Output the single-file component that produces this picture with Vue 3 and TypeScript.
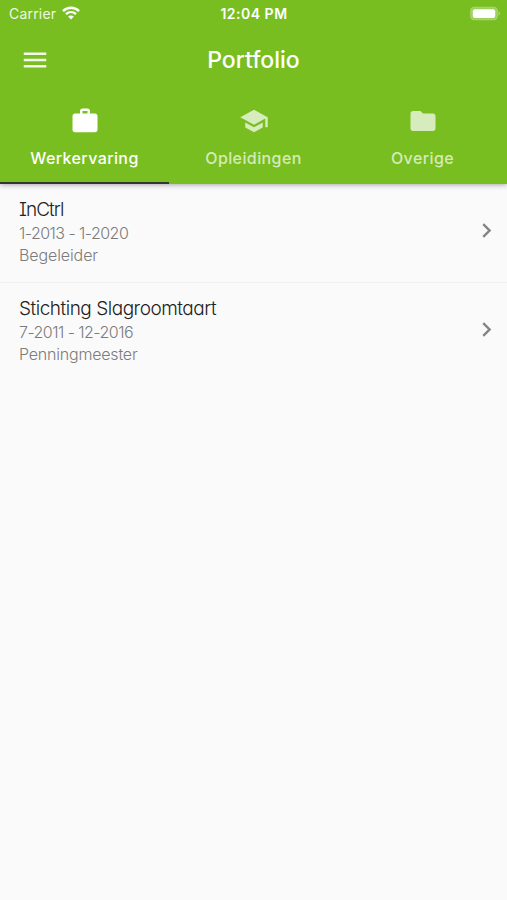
<script setup lang="ts">
import { ref } from 'vue'

interface Tab {
  label: string
  icon: string
  kind: string
}
interface Job {
  company: string
  period: string
  role: string
  kind: string
}

const active = ref(0)

const tabs: Tab[] = [
  {
    label: 'Werkervaring',
    kind: 'work',
    icon: 'M20 6h-4V4c0-1.11-.89-2-2-2h-4c-1.11 0-2 .89-2 2v2H4c-1.11 0-1.99.89-1.99 2L2 19c0 1.11.89 2 2 2h16c1.11 0 2-.89 2-2V8c0-1.11-.89-2-2-2zm-6 0h-4V4h4v2z',
  },
  {
    label: 'Opleidingen',
    kind: 'school',
    icon: 'M5 13.18v4L12 21l7-3.82v-4L12 17l-7-3.82zM12 3 1 9l11 6 9-4.91V17h2V9L12 3z',
  },
  {
    label: 'Overige',
    kind: 'other',
    icon: 'M10 4H4c-1.1 0-1.99.9-1.99 2L2 18c0 1.1.9 2 2 2h16c1.1 0 2-.9 2-2V8c0-1.1-.9-2-2-2h-8l-2-2z',
  },
]

const jobs: Job[] = [
  { company: 'InCtrl', period: '1-2013 - 1-2020', role: 'Begeleider', kind: 'first' },
  { company: 'Stichting Slagroomtaart', period: '7-2011 - 12-2016', role: 'Penningmeester', kind: 'second' },
]
</script>

<template>
  <main class="screen">
    <header class="top">
      <div class="status">
        <div class="network">
          <span class="carrier">Carrier</span>
          <svg class="wifi" viewBox="0 0 18 14">
            <path class="arc" d="M1 5.1C5.5.6 12.5.6 17 5.1" />
            <path class="arc" d="M4 8.2c2.9-2.8 7.1-2.8 10 0" />
            <path class="dot" d="M6.1 10.6c1.7-1.5 4.1-1.5 5.8 0L9 13.6z" />
          </svg>
        </div>
        <span class="clock">12:04 PM</span>
        <svg class="battery" viewBox="0 0 32 15">
          <rect class="shell" x="1.5" y="1" width="27" height="13" rx="4" />
          <rect class="charge" x="3.8" y="3.2" width="22.4" height="8.8" rx="2" />
          <path class="tip" d="M29.5 5.3c2 .7 2 3.6 0 4.3z" />
        </svg>
      </div>
      <div class="bar">
        <svg class="menu" viewBox="0 0 24 24"><path d="M3 18h18v-2H3v2zm0-5h18v-2H3v2zm0-7v2h18V6H3z" /></svg>
        <h1 class="title">Portfolio</h1>
      </div>
      <nav class="tabs">
        <button
          v-for="(tab, i) in tabs"
          :key="tab.label"
          class="tab"
          :class="[tab.kind, { active: i === active }]"
          @click="active = i"
        >
          <svg class="tab-icon" viewBox="0 0 24 24"><path :d="tab.icon" /></svg>
          <span class="tab-label">{{ tab.label }}</span>
        </button>
      </nav>
    </header>
    <ul class="list">
      <li v-for="job in jobs" :key="job.company" class="item" :class="job.kind">
        <div class="info">
          <span class="company">{{ job.company }}</span>
          <span class="line period">{{ job.period }}</span>
          <span class="line role">{{ job.role }}</span>
        </div>
        <svg class="chevron" viewBox="0 0 24 24"><path d="M10 6 8.59 7.41 13.17 12l-4.58 4.59L10 18l6-6z" /></svg>
      </li>
    </ul>
  </main>
</template>

<style>
body {
  background: #fafafa;
}
</style>

<style scoped>
.screen {
  box-sizing: border-box;
  width: 507px;
  height: 900px;
  overflow: hidden;
  background: #fafafa;
  font-family: Inter, "Liberation Sans", sans-serif;
}
.top {
  display: flex;
  flex-direction: column;
  height: 184px;
  background: #79be20;
  color: #fff;
  box-shadow: 0 1px 5px rgba(40, 30, 60, 0.38);
}
.status {
  display: grid;
  grid-template-columns: 1fr auto 1fr;
  align-items: center;
  height: 27px;
  padding: 0 6px 0 9px;
}
.network {
  display: flex;
  align-items: center;
  gap: 6px;
}
.carrier {
  font-size: 14px;
  letter-spacing: 0.2px;
  color: rgba(255, 255, 255, 0.9);
}
.wifi {
  width: 18px;
  height: 14px;
  margin-top: -1px;
}
.arc {
  fill: none;
  stroke: #fff;
  stroke-width: 2.4;
}
.dot,
.charge {
  fill: #fff;
}
.clock {
  margin-right: 2px;
  font-size: 14px;
  font-weight: 600;
  letter-spacing: 0.5px;
}
.battery {
  width: 32px;
  height: 15px;
  justify-self: end;
}
.shell {
  fill: rgba(255, 255, 255, 0.28);
  stroke: rgba(255, 255, 255, 0.18);
  stroke-width: 1.2;
}
.tip {
  fill: rgba(255, 255, 255, 0.35);
}
.bar {
  display: grid;
  grid-template-columns: 1fr auto 1fr;
  align-items: center;
  height: 66px;
  padding: 0 20px;
}
.menu {
  width: 30px;
  height: 30px;
  fill: rgba(255, 255, 255, 0.92);
}
.title {
  margin: 0;
  font-size: 23px;
  font-weight: 500;
}
.tabs {
  display: grid;
  grid-template-columns: repeat(3, 1fr);
  flex: 1;
}
.tab {
  display: flex;
  flex-direction: column;
  align-items: center;
  gap: 12px;
  padding: 13px 0 0;
  border: 0;
  border-bottom: 2px solid transparent;
  background: none;
  color: rgba(255, 255, 255, 0.7);
  font: 500 16px/20px Inter, "Liberation Sans", sans-serif;
  letter-spacing: 0.4px;
}
.tab.active {
  border-bottom-color: #35372f;
  color: #fff;
}
.tab-icon {
  width: 30px;
  height: 30px;
  fill: currentColor;
}
.list {
  margin: 0;
  padding: 0;
  list-style: none;
}
.item {
  box-sizing: border-box;
  display: flex;
  align-items: center;
  justify-content: space-between;
  height: 99px;
  padding: 0 6px 6px 19px;
  border-bottom: 1px solid #f0f0f0;
}
.item:last-child {
  border-bottom-color: transparent;
}
.info {
  display: flex;
  flex-direction: column;
  padding-top: 2px;
  font-feature-settings: "cv11", "cv08";
}
.company {
  font-size: 19px;
  line-height: 25px;
  font-weight: 300;
  letter-spacing: -0.48px;
  color: #222;
}
.first .company {
  letter-spacing: -0.95px;
}
.line {
  font-size: 16px;
  line-height: 22px;
  font-weight: 300;
  color: #7c7c7c;
}
.period {
  letter-spacing: -0.54px;
}
.role {
  letter-spacing: -0.2px;
}
.first .role {
  letter-spacing: -0.1px;
}
.chevron {
  width: 29px;
  height: 29px;
  fill: #858585;
}
</style>
